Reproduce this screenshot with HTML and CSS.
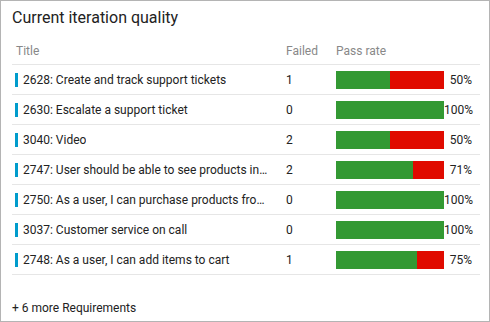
FILE: index.html
```html
<!DOCTYPE html>
<html lang="en">
<head>
<meta charset="UTF-8">
<meta name="viewport" content="width=device-width, initial-scale=1.0">
<title>Current iteration quality</title>
<link rel="stylesheet" href="styles.css">
</head>
<body>
<div class="widget">
    <h2 class="title">Current iteration quality</h2>
    <table class="grid">
        <colgroup>
            <col class="col-title">
            <col class="col-failed">
            <col class="col-pass">
        </colgroup>
        <thead>
            <tr>
                <th class="th-title">Title</th>
                <th>Failed</th>
                <th>Pass rate</th>
            </tr>
        </thead>
        <tbody>
            <tr>
                <td><div class="item"><span class="marker"></span><span class="name">2628: Create and track support tickets</span></div></td>
                <td>1</td>
                <td><div class="pass"><div class="bar"><span class="ok" style="width: 50%"></span><span class="bad"></span></div><span class="pct">50%</span></div></td>
            </tr>
            <tr>
                <td><div class="item"><span class="marker"></span><span class="name">2630: Escalate a support ticket</span></div></td>
                <td>0</td>
                <td><div class="pass"><div class="bar"><span class="ok" style="width: 100%"></span><span class="bad"></span></div><span class="pct">100%</span></div></td>
            </tr>
            <tr>
                <td><div class="item"><span class="marker"></span><span class="name">3040: Video</span></div></td>
                <td>2</td>
                <td><div class="pass"><div class="bar"><span class="ok" style="width: 50%"></span><span class="bad"></span></div><span class="pct">50%</span></div></td>
            </tr>
            <tr>
                <td><div class="item"><span class="marker"></span><span class="name">2747: User should be able to see products in the catalog</span></div></td>
                <td>2</td>
                <td><div class="pass"><div class="bar"><span class="ok" style="width: 71.4%"></span><span class="bad"></span></div><span class="pct">71%</span></div></td>
            </tr>
            <tr>
                <td><div class="item"><span class="marker"></span><span class="name">2750: As a user, I can purchase products from the store</span></div></td>
                <td>0</td>
                <td><div class="pass"><div class="bar"><span class="ok" style="width: 100%"></span><span class="bad"></span></div><span class="pct">100%</span></div></td>
            </tr>
            <tr>
                <td><div class="item"><span class="marker"></span><span class="name">3037: Customer service on call</span></div></td>
                <td>0</td>
                <td><div class="pass"><div class="bar"><span class="ok" style="width: 100%"></span><span class="bad"></span></div><span class="pct">100%</span></div></td>
            </tr>
            <tr>
                <td><div class="item"><span class="marker"></span><span class="name">2748: As a user, I can add items to cart</span></div></td>
                <td>1</td>
                <td><div class="pass"><div class="bar"><span class="ok" style="width: 75%"></span><span class="bad"></span></div><span class="pct">75%</span></div></td>
            </tr>
        </tbody>
    </table>
    <div class="more">+ 6 more Requirements</div>
</div>
</body>
</html>
```

FILE: styles.css
```css
body {
    margin: 0;
    padding: 0;
    font-family: Roboto, "Noto Sans", sans-serif;
    color: #222;
    background-color: #fff;
}
.widget {
    width: 490px;
    height: 322px;
    box-sizing: border-box;
    border: 1px solid #b4b4b4;
    padding: 7px 0 0 11px;
    overflow: hidden;
}
.title {
    margin: 0;
    font-size: 16px;
    font-weight: normal;
    line-height: 20px;
    color: #222;
}
.grid {
    width: 468px;
    margin-top: 10px;
    border-collapse: collapse;
    table-layout: fixed;
    font-size: 12px;
}
.col-title {
    width: 270px;
}
.col-failed {
    width: 50px;
}
.col-pass {
    width: 148px;
}
th {
    height: 26px;
    padding: 0 0 0 4px;
    text-align: left;
    font-weight: normal;
    color: #888;
    border-bottom: 1px solid #e6e6e6;
}
td {
    height: 29px;
    padding: 0 0 0 4px;
    border-bottom: 1px solid #e6e6e6;
    white-space: nowrap;
}
.item {
    display: flex;
    align-items: center;
    padding-right: 12px;
    margin-left: -1px;
}
.marker {
    flex: none;
    width: 3px;
    height: 14px;
    margin-right: 5px;
    background-color: #009ccc;
}
.name {
    overflow: hidden;
    text-overflow: ellipsis;
    white-space: nowrap;
}
.pass {
    display: flex;
    align-items: center;
}
.bar {
    display: flex;
    width: 108px;
    height: 18px;
}
.ok {
    background-color: #339933;
}
.bad {
    flex: 1;
    background-color: #e00b00;
}
.pct {
    width: 28px;
    text-align: right;
}
.more {
    margin-top: 23px;
    font-size: 12px;
    line-height: 20px;
}
```
